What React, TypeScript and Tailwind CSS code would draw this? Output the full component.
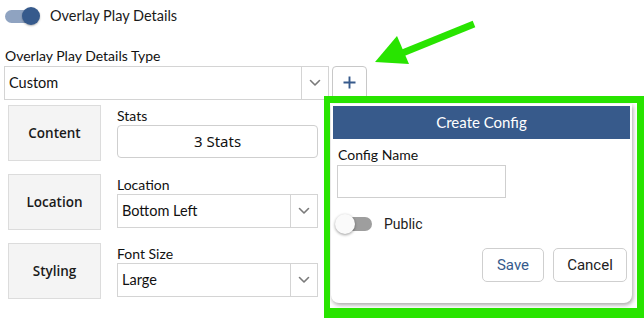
import React from "react";

const Chevron = () => (
  <svg width="12" height="8" viewBox="0 0 12 8" fill="none">
    <path d="M1.5 1.5 L6 6 L10.5 1.5" stroke="#7a7a7a" strokeWidth="1.6" strokeLinecap="round" strokeLinejoin="round" />
  </svg>
);

const SelectBox = ({ value, w }: { value: string; w: string }) => (
  <div className={`flex h-[34px] ${w} items-stretch border border-[#d4d4d4] bg-white`}>
    <div className="flex flex-1 items-center pl-[4px] text-[14.5px] text-[#111]">{value}</div>
    <div className="flex w-[27px] items-center justify-center border-l border-[#d4d4d4]">
      <Chevron />
    </div>
  </div>
);

const Row = ({ title, label, children }: { title: string; label: string; children: React.ReactNode }) => (
  <div className="flex">
    <div
      className="flex h-[56px] w-[93px] items-center justify-center border border-[#dcdcdc] bg-[#f4f4f4] text-[13.5px] font-semibold text-[#1a1a1a]"
      style={{ fontFamily: '"Open Sans", sans-serif' }}
    >
      {title}
    </div>
    <div className="ml-[16px] flex w-[201px] flex-col">
      <div className="h-[20px] pt-[2px] text-[14px] leading-[18px] text-[#111]">{label}</div>
      {children}
    </div>
  </div>
);

export default function App() {
  return (
    <div
      className="relative h-[318px] w-[644px] overflow-hidden bg-white"
      style={{ fontFamily: 'Lato, "Open Sans", sans-serif' }}
    >
      {/* top toggle */}
      <div className="flex h-[32px] items-center pl-[5px]">
        <div className="relative h-[20px] w-[36px]">
          <div className="absolute left-0 top-[3.5px] h-[13px] w-[32px] rounded-full bg-[#8fa3c1]" />
          <div className="absolute left-[17px] top-[1px] h-[18px] w-[18px] rounded-full bg-[#365a8c] shadow-[0_1px_2px_rgba(0,0,0,0.3)]" />
        </div>
        <span className="ml-[9px] text-[14.5px] text-[#1a1a1a]">Overlay Play Details</span>
      </div>

      <div className="mt-[14px] pl-[5px] text-[14px] leading-[20px] text-[#111]">Overlay Play Details Type</div>

      <div className="flex items-start pl-[4px]">
        <SelectBox value="Custom" w="w-[325px]" />
        <div className="ml-[3px] flex h-[33px] w-[35px] items-center justify-center rounded-t-[4px] border border-[#c8c8c8] bg-white">
          <svg width="13" height="13" viewBox="0 0 13 13">
            <path d="M6.5 0.5 V12.5 M0.5 6.5 H12.5" stroke="#365a8c" strokeWidth="1.9" />
          </svg>
        </div>
      </div>

      <div className="mt-[5px] flex flex-col gap-[13px] pl-[8px]">
        <Row title="Content" label="Stats">
          <div
            className="flex h-[33px] items-center justify-center rounded-[4px] border border-[#cfcfcf] text-[15px] text-[#111]"
            style={{ fontFamily: '"Noto Sans", sans-serif' }}
          >
            3 Stats
          </div>
        </Row>
        <Row title="Location" label="Location">
          <SelectBox value="Bottom Left" w="w-[201px]" />
        </Row>
        <Row title="Styling" label="Font Size">
          <SelectBox value="Large" w="w-[201px]" />
        </Row>
      </div>

      {/* popover card */}
      <div className="absolute left-[331px] top-[104px] flex h-[199px] w-[301px] flex-col rounded-b-[8px] bg-white shadow-[1px_2px_4px_rgba(0,0,0,0.35)]">
        <div className="mx-[2px] mt-[2px] flex h-[33px] items-center justify-center bg-[#375a8b] text-[15px] text-white">
          Create Config
        </div>
        <div className="mt-[6px] pl-[7px] text-[14px] leading-[20px] text-[#111]">Config Name</div>
        <div className="ml-[6px] h-[33px] w-[169px] border border-[#cfcfcf]" />
        <div className="mt-[12px] flex h-[28px] items-center" style={{ fontFamily: 'Roboto, sans-serif' }}>
          <div className="relative ml-[4px] h-[20px] w-[38px]">
            <div className="absolute left-[5px] top-[3px] h-[14px] w-[32px] rounded-full bg-[#9e9e9e]" />
            <div className="absolute left-0 top-0 h-[20px] w-[20px] rounded-full bg-[#fafafa] shadow-[0_1px_3px_rgba(0,0,0,0.4)]" />
          </div>
          <span className="ml-[11px] text-[14px] text-[#222]">Public</span>
        </div>
        <div className="mt-[10px] flex justify-end gap-[9px] pr-[5px]" style={{ fontFamily: 'Roboto, sans-serif' }}>
          <div className="flex h-[34px] w-[62px] items-center justify-center rounded-[5px] border border-[#cfcfcf] text-[15px] text-[#365a8c]">
            Save
          </div>
          <div className="flex h-[34px] w-[74px] items-center justify-center rounded-[5px] border border-[#cfcfcf] text-[15px] text-[#222]">
            Cancel
          </div>
        </div>
      </div>

      {/* green annotation frame */}
      <div className="pointer-events-none absolute left-[324px] top-[96px] h-[222px] w-[320px] border-b-[10px] border-l-[6px] border-r-[7px] border-t-[7px] border-[#28e400]" />

      {/* green arrow */}
      <svg className="pointer-events-none absolute left-0 top-0" width="644" height="318">
        <line x1="474" y1="24" x2="400" y2="54" stroke="#28e400" strokeWidth="7" />
        <polygon points="375,62 397,36 409,64" fill="#28e400" />
      </svg>
    </div>
  );
}
